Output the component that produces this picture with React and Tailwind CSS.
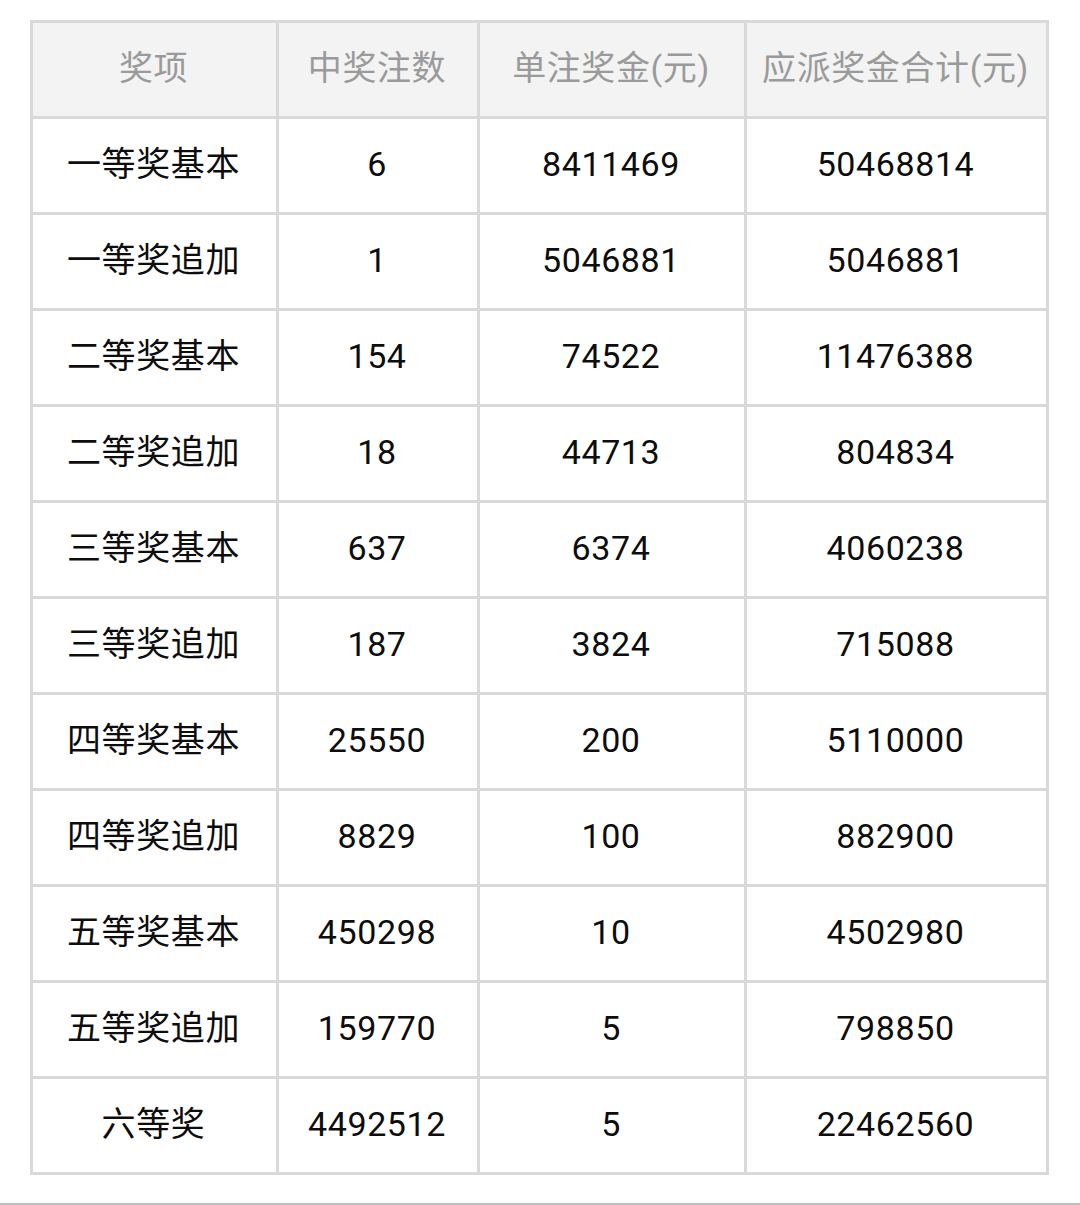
import React from 'react';

const rows = [
  ['一等奖基本', '6', '8411469', '50468814'],
  ['一等奖追加', '1', '5046881', '5046881'],
  ['二等奖基本', '154', '74522', '11476388'],
  ['二等奖追加', '18', '44713', '804834'],
  ['三等奖基本', '637', '6374', '4060238'],
  ['三等奖追加', '187', '3824', '715088'],
  ['四等奖基本', '25550', '200', '5110000'],
  ['四等奖追加', '8829', '100', '882900'],
  ['五等奖基本', '450298', '10', '4502980'],
  ['五等奖追加', '159770', '5', '798850'],
  ['六等奖', '4492512', '5', '22462560'],
];

const headers = ['奖项', '中奖注数', '单注奖金(元)', '应派奖金合计(元)'];

const App = () => {
  return (
    <div
      className="w-[1080px] h-[1205px] bg-white flex flex-col"
      style={{ fontFamily: 'Roboto, "Noto Sans CJK SC", sans-serif' }}
    >
      {/* Prize table */}
      <div className="ml-[30px] mt-[20px] w-[1019px] grid grid-cols-[243px_198px_264px_299px] auto-rows-[93px] gap-[3px] p-[3px] bg-[#d9d9d9] text-[34px] tracking-[0.6px]">
        {headers.map((h) => (
          <div key={h} className="bg-[#f3f3f3] text-[#9a9a9a] flex items-center justify-center pb-[3px] pr-[2px]">
            {h}
          </div>
        ))}
        {rows.map((r) =>
          r.map((c, i) => (
            <div key={r[0] + i} className="bg-white text-[#0d0d0d] flex items-center justify-center pb-[3px] pr-[2px]">
              {c}
            </div>
          ))
        )}
      </div>

      <div className="flex-1" />
      <div className="h-[2px] bg-[#bdbdbd]" />
    </div>
  );
};

export default App;
